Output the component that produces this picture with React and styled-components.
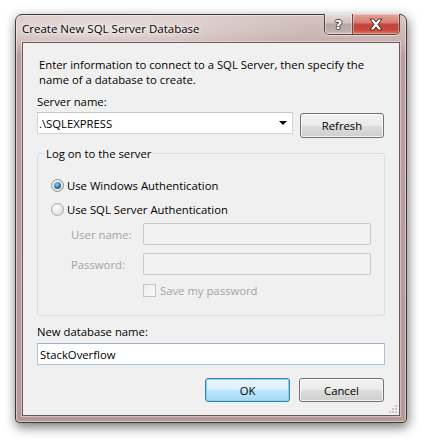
import React from "react";
import styled, { createGlobalStyle } from "styled-components";

const GlobalStyle = createGlobalStyle`
  html, body { margin: 0; padding: 0; background: #ffffff; }
  body { font-family: "Open Sans", "Noto Sans", sans-serif; font-size: 11.3px; color: #000; }
  * { box-sizing: border-box; }
`;

const Page = styled.div`
  padding: 14px 0 0 15px;
  width: 426px;
  height: 443px;
`;

const Window = styled.div`
  width: 392px;
  height: 409px;
  display: flex;
  flex-direction: column;
  border: 1px solid #443634;
  border-radius: 7px 7px 4px 4px;
  background:
    radial-gradient(ellipse 200px 26px at 90px 14px, rgba(255,255,255,0.5), rgba(255,255,255,0) 100%),
    linear-gradient(to bottom, #d6c6c3 0px, #c7b1ad 28px, #b8a09c 40px, #b39a96 100%);
  box-shadow: 1px 4px 12px rgba(0, 0, 0, 0.55), inset 0 0 0 1px rgba(255,255,255,0.45);
`;

const TitleBar = styled.div`
  height: 27px;
  display: flex;
  align-items: flex-start;
  padding-left: 6px;
  padding-right: 6px;
`;

const Title = styled.div`
  flex: 1;
  padding-top: 6px;
  font-size: 11.5px;
  line-height: 16px;
  color: #000;
  text-shadow: 0 0 6px rgba(255,255,255,0.95), 0 0 3px rgba(255,255,255,0.9);
`;

const CaptionButtons = styled.div`
  display: flex;
  margin-top: -1px;
  border: 1px solid #56443f;
  border-top: none;
  border-radius: 0 0 5px 5px;
  overflow: hidden;
  box-shadow: 0 1px 0 rgba(255,255,255,0.5);
`;

const CaptionButton = styled.div`
  width: ${(p) => p.$w}px;
  height: 20px;
  display: flex;
  align-items: center;
  justify-content: center;
  background: ${(p) =>
    p.$close
      ? "linear-gradient(to bottom, #e4a79e 0%, #d57b6f 45%, #c3443a 50%, #c8473b 80%, #dd7862 100%)"
      : "linear-gradient(to bottom, #e6dcdb 0%, #d0c3c1 45%, #b6a6a4 50%, #bdadab 85%, #d3c7c5 100%)"};
  border-left: ${(p) => (p.$close ? "1px solid #6a4a44" : "none")};
  box-shadow: inset 0 0 0 1px rgba(255,255,255,0.35);
`;

const HelpGlyph = styled.span`
  font-family: "DejaVu Sans", sans-serif;
  font-weight: bold;
  font-size: 13px;
  line-height: 13px;
  color: #fff;
  text-shadow: -1px 0 #4b4241, 1px 0 #4b4241, 0 -1px #4b4241, 0 1px #4b4241;
`;

const Client = styled.div`
  position: relative;
  flex: 1;
  margin: 0 6px 6px 6px;
  border: 1px solid #6a5956;
  box-shadow: 0 0 0 1px rgba(255,255,255,0.4);
  background: #f0f0f0;
  padding: 14px 14px 0 14px;
  display: flex;
  flex-direction: column;
`;

const Intro = styled.div`
  margin-left: 2px;
  line-height: 15px;
`;

const Label = styled.div`
  line-height: 15px;
  margin-top: ${(p) => p.$mt || 0}px;
  color: ${(p) => (p.$disabled ? "#a3a3a3" : "#000")};
`;

const Row = styled.div`
  display: flex;
  align-items: flex-start;
  gap: 7px;
  margin-top: 3px;
`;

const Combo = styled.div`
  width: 256px;
  height: 22px;
  background: #fff;
  border: 1px solid #d3d3d3;
  border-top-color: #c4c4c4;
  display: flex;
  align-items: center;
  padding-left: 1px;
  padding-right: 5px;
`;

const ComboText = styled.span`
  flex: 1;
  line-height: 15px;
`;

const Arrow = styled.span`
  width: 0;
  height: 0;
  border-left: 4px solid transparent;
  border-right: 4px solid transparent;
  border-top: 4px solid #000;
`;

const Button = styled.button`
  font: inherit;
  color: #000;
  width: ${(p) => p.$w || 85}px;
  height: ${(p) => p.$h || 24}px;
  margin-top: ${(p) => p.$mt || 0}px;
  border-radius: 3px;
  padding: 0;
  border: 1px solid ${(p) => (p.$default ? "#3c7fb1" : "#707070")};
  background: ${(p) =>
    p.$default
      ? "linear-gradient(to bottom, #eaf6fd 0%, #d9f0fc 50%, #bee6fd 50%, #a7d9f5 100%)"
      : "linear-gradient(to bottom, #f2f2f2 0%, #ebebeb 50%, #dddddd 50%, #cfcfcf 100%)"};
  box-shadow: inset 0 0 0 1px ${(p) => (p.$default ? "rgba(120,210,250,0.9)" : "rgba(255,255,255,0.75)")};
`;

const Group = styled.fieldset`
  margin: 8px 0 0 0;
  padding: 0 13px 17px 13px;
  border: 1px solid #d5dfe5;
  border-radius: 3px;
  min-width: 0;
`;

const Legend = styled.legend`
  margin-left: -7px;
  padding: 0 2px;
  line-height: 15px;
`;

const RadioRow = styled.div`
  display: flex;
  align-items: center;
  gap: 3px;
  line-height: 15px;
  margin-top: ${(p) => p.$mt}px;
`;

const RadioCircle = styled.span`
  width: 13px;
  height: 13px;
  border-radius: 50%;
  border: 1px solid #8e8f8f;
  background: radial-gradient(circle at 40% 35%, #ffffff 0%, #e6e6e6 60%, #d0d0d0 100%);
  display: flex;
  align-items: center;
  justify-content: center;
  opacity: ${(p) => (p.$dim ? 0.75 : 1)};
`;

const RadioDot = styled.span`
  width: 7px;
  height: 7px;
  border-radius: 50%;
  background: radial-gradient(circle at 40% 35%, #8fd0f3 0%, #2a6fa8 55%, #1c4f7e 100%);
`;

const FieldRow = styled.div`
  display: flex;
  align-items: center;
  margin-top: ${(p) => p.$mt}px;
  padding-left: 20px;
`;

const FieldLabel = styled.span`
  width: 72px;
  line-height: 15px;
  color: #a3a3a3;
`;

const DisabledInput = styled.div`
  width: 229px;
  height: 22px;
  border: 1px solid #c9c9c9;
  border-radius: 2px;
  background: #f2f2f2;
`;

const CheckRow = styled.div`
  display: flex;
  align-items: center;
  gap: 4px;
  margin-top: 8px;
  padding-left: 92px;
  color: #a3a3a3;
  line-height: 15px;
`;

const CheckBox = styled.span`
  width: 13px;
  height: 13px;
  border: 1px solid #c4c4c4;
  background: linear-gradient(135deg, #ececec, #fafafa);
`;

const TextInput = styled.div`
  height: 22px;
  margin-top: 4px;
  background: #fff;
  border: 1px solid #abc1d6;
  border-top-color: #9fb4c9;
  display: flex;
  align-items: center;
  padding-left: 2px;
  line-height: 15px;
`;

const ButtonBar = styled.div`
  display: flex;
  justify-content: flex-end;
  gap: 9px;
  margin-top: 13px;
  margin-right: 1px;
`;

const Grip = styled.svg`
  position: absolute;
  right: 1px;
  bottom: 1px;
`;

export default function App() {
  return (
    <>
      <GlobalStyle />
      <Page>
        <Window>
          <TitleBar>
            <Title>Create New SQL Server Database</Title>
            <CaptionButtons>
              <CaptionButton $w={27}>
                <HelpGlyph>?</HelpGlyph>
              </CaptionButton>
              <CaptionButton $w={47} $close>
                <svg width="16" height="13" viewBox="0 0 16 13">
                  <path
                    d="M2 1 L5.6 1 L8 4 L10.4 1 L14 1 L10 6.5 L14 12 L10.4 12 L8 9 L5.6 12 L2 12 L6 6.5 Z"
                    fill="#ffffff"
                    stroke="#4a2a26"
                    strokeWidth="1"
                    strokeLinejoin="round"
                  />
                </svg>
              </CaptionButton>
            </CaptionButtons>
          </TitleBar>
          <Client>
            <Intro>
              Enter information to connect to a SQL Server, then specify the
              <br />
              name of a database to create.
            </Intro>
            <Label $mt={7}>Server name:</Label>
            <Row>
              <Combo>
                <ComboText>.\SQLEXPRESS</ComboText>
                <Arrow />
              </Combo>
              <Button $w={84} $h={25} $mt={1}>Refresh</Button>
            </Row>
            <Group>
              <Legend>Log on to the server</Legend>
              <RadioRow $mt={17}>
                <RadioCircle>
                  <RadioDot />
                </RadioCircle>
                Use Windows Authentication
              </RadioRow>
              <RadioRow $mt={9}>
                <RadioCircle $dim />
                Use SQL Server Authentication
              </RadioRow>
              <FieldRow $mt={6}>
                <FieldLabel>User name:</FieldLabel>
                <DisabledInput />
              </FieldRow>
              <FieldRow $mt={8}>
                <FieldLabel>Password:</FieldLabel>
                <DisabledInput />
              </FieldRow>
              <CheckRow>
                <CheckBox />
                Save my password
              </CheckRow>
            </Group>
            <Label $mt={8}>New database name:</Label>
            <TextInput>StackOverflow</TextInput>
            <ButtonBar>
              <Button $default>OK</Button>
              <Button>Cancel</Button>
            </ButtonBar>
            <Grip width="10" height="10" viewBox="0 0 10 10">
              <rect x="7" y="1" width="2" height="2" fill="#c6c6c6" />
              <rect x="4" y="4" width="2" height="2" fill="#c6c6c6" />
              <rect x="7" y="4" width="2" height="2" fill="#c6c6c6" />
              <rect x="1" y="7" width="2" height="2" fill="#c6c6c6" />
              <rect x="4" y="7" width="2" height="2" fill="#c6c6c6" />
              <rect x="7" y="7" width="2" height="2" fill="#c6c6c6" />
            </Grip>
          </Client>
        </Window>
      </Page>
    </>
  );
}
